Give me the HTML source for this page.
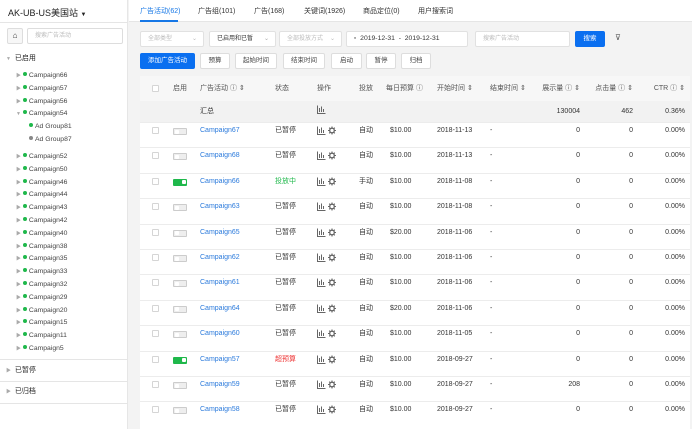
<!DOCTYPE html>
<html><head><meta charset="utf-8"><style>
*{margin:0;padding:0;box-sizing:border-box}
body{width:692px;height:429px;overflow:hidden;background:#f3f3f3;font-family:"Liberation Sans","Noto Sans CJK SC",sans-serif;font-size:7px;color:#333;position:relative}
.a{position:absolute;white-space:nowrap;line-height:10px}
#side{position:absolute;left:0;top:0;width:128px;height:429px;background:#fff;border-right:1px solid #e6e6e6}
.dot{display:inline-block;width:4px;height:4px;border-radius:50%;background:#1fb84b;margin-right:2px;vertical-align:1px}
.tri{color:#aaa;font-size:5px}
.hr{position:absolute;left:0;width:128px;height:1px;background:#e5e5e5}
.btn{position:absolute;height:16px;border:1px solid #ddd;background:#fff;border-radius:2px;text-align:center;line-height:14px;font-size:6.5px;color:#444}
.sel{position:absolute;height:16px;border:1px solid #e1e1e1;background:#fff;border-radius:2px;line-height:14px;font-size:6px;color:#bbb;padding-left:7px;white-space:nowrap}
#tbl{position:absolute;left:140px;top:76px;width:550px;height:353px;background:#fff}
.row{position:absolute;left:0;width:550px;height:25.4px;border-top:1px solid #ececec}
.row .a{top:3px}
.cb{position:absolute;left:12px;width:7px;height:7px;border:1px solid #d5d5d5;border-radius:1px;background:#fff}
.tg{position:absolute;left:33px;top:8px;width:14px;height:7px;border:1px solid #ccc;border-radius:1px;background:#eee}
.tg.on{background:#1fb84b;border-color:#1fb84b}
.tg i{position:absolute;top:0.5px;width:4px;height:4px;background:#fff;border-radius:1px;left:1px}
.tg.on i{left:8px}
.lnk{color:#2c7bdc}
.r{text-align:right}
.side-list{position:absolute;left:16px;font-size:6.8px;color:#444}
.side-list div{height:12.8px;line-height:12.8px;white-space:nowrap}
</style></head><body>
<div id="side">
<div class="a" style="left:8px;top:8px;font-size:9px;color:#222">AK-UB-US美国站 <span style="font-size:6px">▼</span></div>
<div class="hr" style="top:22px"></div>
<div class="a" style="left:7px;top:28px;width:16px;height:16px;border:1px solid #ddd;border-radius:2px;background:#f7f7f7;text-align:center;line-height:14px;font-size:8px">⌂</div>
<div class="a" style="left:27px;top:28px;width:96px;height:16px;border:1px solid #ddd;border-radius:2px;font-size:6px;color:#bbb;line-height:14px;padding-left:7px">搜索广告活动</div>
<div class="a" style="left:6px;top:54px;font-size:7px;color:#222"><span class="tri">▼</span> &nbsp;已启用</div>
<div class="side-list" style="top:70px">
<div><span class="tri">▶</span> <span class="dot"></span>Campaign66</div>
<div><span class="tri">▶</span> <span class="dot"></span>Campaign57</div>
<div><span class="tri">▶</span> <span class="dot"></span>Campaign56</div>
<div><span class="tri">▼</span> <span class="dot"></span>Campaign54</div>
<div style="padding-left:13px"><span class="dot"></span>Ad Group81</div>
<div style="padding-left:13px"><span class="dot" style="background:#888"></span>Ad Group87</div></div>
<div class="side-list" style="top:151px">
<div><span class="tri">▶</span> <span class="dot"></span>Campaign52</div><div><span class="tri">▶</span> <span class="dot"></span>Campaign50</div><div><span class="tri">▶</span> <span class="dot"></span>Campaign46</div><div><span class="tri">▶</span> <span class="dot"></span>Campaign44</div><div><span class="tri">▶</span> <span class="dot"></span>Campaign43</div><div><span class="tri">▶</span> <span class="dot"></span>Campaign42</div><div><span class="tri">▶</span> <span class="dot"></span>Campaign40</div><div><span class="tri">▶</span> <span class="dot"></span>Campaign38</div><div><span class="tri">▶</span> <span class="dot"></span>Campaign35</div><div><span class="tri">▶</span> <span class="dot"></span>Campaign33</div><div><span class="tri">▶</span> <span class="dot"></span>Campaign32</div><div><span class="tri">▶</span> <span class="dot"></span>Campaign29</div><div><span class="tri">▶</span> <span class="dot"></span>Campaign20</div><div><span class="tri">▶</span> <span class="dot"></span>Campaign15</div><div><span class="tri">▶</span> <span class="dot"></span>Campaign11</div><div><span class="tri">▶</span> <span class="dot"></span>Campaign5</div></div>
<div class="hr" style="top:359px"></div>
<div class="a" style="left:6px;top:366px;color:#222"><span class="tri">▶</span> &nbsp;已暂停</div>
<div class="hr" style="top:381px"></div>
<div class="a" style="left:6px;top:387px;color:#222"><span class="tri">▶</span> &nbsp;已归档</div>
<div class="hr" style="top:403px"></div>
</div>
<div class="a" style="left:129px;top:0;width:563px;height:22px;background:#fff;border-bottom:1px solid #e5e5e5"></div>
<div class="a" style="left:140px;top:7px;font-size:7px;color:#1677e6">广告活动(62)</div>
<div class="a" style="left:140px;top:20px;width:38px;height:1.5px;background:#1677e6"></div>
<div class="a" style="left:198px;top:7px;font-size:7px">广告组(101)</div>
<div class="a" style="left:254px;top:7px;font-size:7px">广告(168)</div>
<div class="a" style="left:304px;top:7px;font-size:7px">关键词(1926)</div>
<div class="a" style="left:363px;top:7px;font-size:7px">商品定位(0)</div>
<div class="a" style="left:418px;top:7px;font-size:7px">用户搜索词</div>
<div class="sel" style="left:140px;top:31px;width:64px">全部类型<span style="float:right;margin-right:6px">⌄</span></div>
<div class="sel" style="left:209px;top:31px;width:67px;color:#333">已启用和已暂<span style="float:right;margin-right:6px;color:#aaa">⌄</span></div>
<div class="sel" style="left:279px;top:31px;width:63px">全部投放方式<span style="float:right;margin-right:6px">⌄</span></div>
<div class="sel" style="left:346px;top:31px;width:122px;color:#333;font-size:6.8px">▫ &nbsp;2019-12-31 &nbsp;- &nbsp;2019-12-31</div>
<div class="sel" style="left:475px;top:31px;width:95px">搜索广告活动</div>
<div class="btn" style="left:575px;top:31px;width:30px;background:#0a6ff0;border-color:#0a6ff0;color:#fff">搜索</div>
<div class="a" style="left:615px;top:33px;font-size:8px;color:#555">⊽</div>
<div class="btn" style="left:140px;top:53px;width:55px;background:#0a6ff0;border-color:#0a6ff0;color:#fff">添加广告活动</div>
<div class="btn" style="left:200px;top:53px;width:30px">预算</div>
<div class="btn" style="left:235px;top:53px;width:42px">起始时间</div>
<div class="btn" style="left:283px;top:53px;width:42px">结束时间</div>
<div class="btn" style="left:331px;top:53px;width:31px">启动</div>
<div class="btn" style="left:366px;top:53px;width:30px">暂停</div>
<div class="btn" style="left:401px;top:53px;width:30px">归档</div>
<div id="tbl">
<div class="row" style="top:0;height:25px;background:#f7f7f7;border:none;color:#555">
<div class="cb" style="top:9px"></div>
<div class="a" style="left:33px;top:8px">启用</div><div class="a" style="left:60px;top:8px">广告活动 ⓘ ⇕</div>
<div class="a" style="left:135px;top:8px">状态</div><div class="a" style="left:177px;top:8px">操作</div>
<div class="a" style="left:219px;top:8px">投放</div><div class="a" style="left:246px;top:8px">每日预算 ⓘ</div>
<div class="a" style="left:297px;top:8px">开始时间 ⇕</div><div class="a" style="left:350px;top:8px">结束时间 ⇕</div>
<div class="a r" style="left:380px;width:60px;top:8px">展示量 ⓘ ⇕</div>
<div class="a r" style="left:433px;width:60px;top:8px">点击量 ⓘ ⇕</div>
<div class="a r" style="left:485px;width:60px;top:8px">CTR ⓘ ⇕</div>
</div>
<div class="row" style="top:25px;height:21px;background:#f2f2f2;border:none">
<div class="a" style="left:60px;top:6px">汇总</div>
<svg class="a" style="left:177px;top:4px" width="9" height="9" viewBox="0 0 9 9"><path d="M0.5 0.5V8.5H8.5M2.5 7V3M4.5 7V1.5M6.5 7V4" stroke="#666" fill="none"/></svg>
<div class="a r" style="left:380px;width:60px;top:6px">130004</div>
<div class="a r" style="left:433px;width:60px;top:6px">462</div>
<div class="a r" style="left:485px;width:60px;top:6px">0.36%</div>
</div>
<div id="rows"></div>
</div>
<script>
var d=[["67","已暂停","自动","10","2018-11-13","0",0],["68","已暂停","自动","10","2018-11-13","0",0],["66","投放中","手动","10","2018-11-08","0",1],["63","已暂停","自动","10","2018-11-08","0",0],["65","已暂停","自动","20","2018-11-06","0",0],["62","已暂停","自动","10","2018-11-06","0",0],["61","已暂停","自动","10","2018-11-06","0",0],["64","已暂停","自动","20","2018-11-06","0",0],["60","已暂停","自动","10","2018-11-05","0",0],["57","超预算","自动","10","2018-09-27","0",1],["59","已暂停","自动","10","2018-09-27","208",0],["58","已暂停","自动","10","2018-09-27","0",0]];
var ic='<svg class="a" style="left:177px;top:3px" width="20" height="9" viewBox="0 0 20 9"><path d="M0.5 0.5V8.5H8.5M2.5 7V3M4.5 7V1.5M6.5 7V4" stroke="#666" fill="none"/><circle cx="15" cy="4.5" r="2.3" stroke="#666" stroke-width="1.3" fill="none"/><path d="M15 0.5V2M15 7V8.5M11 4.5H12.5M17.5 4.5H19M12.2 1.7L13.2 2.7M16.8 6.3L17.8 7.3M12.2 7.3L13.2 6.3M16.8 2.7L17.8 1.7" stroke="#666" stroke-width="1.1"/></svg>';
var h="";d.forEach(function(r,i){var t=46+i*25.4;var c=r[1]=="投放中"?"#1fb84b":r[1]=="超预算"?"#e33":"#333";
h+='<div class="row" style="top:'+t+'px"><div class="cb" style="top:4px"></div><div class="tg'+(r[6]?' on':'')+'" style="top:5px"><i></i></div>'+
'<div class="a lnk" style="left:60px">Campaign'+r[0]+'</div><div class="a" style="left:135px;color:'+c+'">'+r[1]+'</div>'+ic+
'<div class="a" style="left:219px">'+r[2]+'</div>'+
'<div class="a" style="left:250px">$'+r[3]+'.00</div><div class="a" style="left:297px">'+r[4]+'</div><div class="a" style="left:350px">-</div>'+
'<div class="a r" style="left:380px;width:60px">'+r[5]+'</div><div class="a r" style="left:433px;width:60px">0</div><div class="a r" style="left:485px;width:60px">0.00%</div></div>';});
document.getElementById("rows").innerHTML=h;
</script>
</body></html>
